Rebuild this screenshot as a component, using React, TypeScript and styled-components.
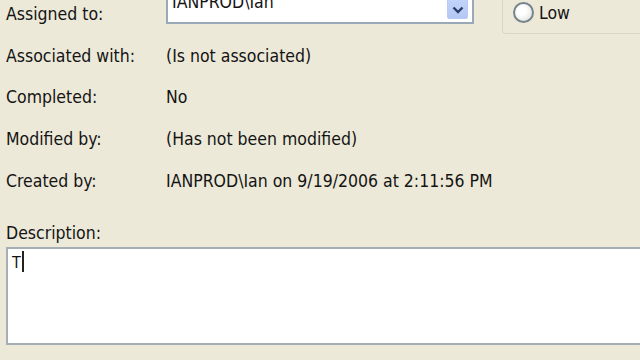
import React from "react";
import styled, { createGlobalStyle } from "styled-components";

const GlobalStyle = createGlobalStyle`
  html, body {
    margin: 0;
    padding: 0;
    background: #ece9d8;
    overflow: hidden;
  }
  body {
    font-family: "DejaVu Sans Condensed", "DejaVu Sans", "Liberation Sans", sans-serif;
    font-size: 17.5px;
    color: #141414;
  }
`;

type Field = { label: string; value: string };

const fields: Field[] = [
  { label: "Associated with:", value: "(Is not associated)" },
  { label: "Completed:", value: "No" },
  { label: "Modified by:", value: "(Has not been modified)" },
  { label: "Created by:", value: "IANPROD\\Ian on 9/19/2006 at 2:11:56 PM" },
];

export default function App() {
  return (
    <>
      <GlobalStyle />
      <Page>
        <FieldGrid>
          <Label>Assigned to:</Label>
          <ValueCell>
            <Combo>
              <ComboText>IANPROD\Ian</ComboText>
              <DropButton>
                <svg width="12" height="8" viewBox="0 0 12 8">
                  <path d="M1.5 1.5 L6 6 L10.5 1.5" fill="none" stroke="#2c3f6b" strokeWidth="2.4" />
                </svg>
              </DropButton>
            </Combo>
            <PriorityBox>
              <RadioRow>
                <Radio />
                <span>Low</span>
              </RadioRow>
            </PriorityBox>
          </ValueCell>
          {fields.map((f) => (
            <React.Fragment key={f.label}>
              <Label>{f.label}</Label>
              <Value>{f.value}</Value>
            </React.Fragment>
          ))}
        </FieldGrid>
        <DescLabel>Description:</DescLabel>
        <TextBox>
          T<Caret />
        </TextBox>
      </Page>
    </>
  );
}

const Page = styled.div`
  padding-left: 6px;
  margin-top: -7px;
`;

const FieldGrid = styled.div`
  display: grid;
  grid-template-columns: 160px 1fr;
  grid-auto-rows: 41.7px;
  align-items: center;
`;

const Label = styled.div`
  white-space: nowrap;
`;

const Value = styled.div`
  white-space: nowrap;
`;

const ValueCell = styled.div`
  align-self: stretch;
  display: flex;
  align-items: flex-start;
`;

const Combo = styled.div`
  margin-top: -4px;
  width: 308px;
  height: 35px;
  box-sizing: border-box;
  border: 2px solid #9aa9b8;
  background: #fff;
  display: flex;
  align-items: flex-end;
  justify-content: space-between;
  padding: 0 4px 3px 4px;
`;

const ComboText = styled.span`
  margin-bottom: 7px;
`;

const DropButton = styled.div`
  width: 21px;
  height: 24px;
  box-sizing: border-box;
  border-radius: 2px;
  background: linear-gradient(#c6d6fb, #b2c8f4);
  border: 1px solid #b9cbf2;
  display: flex;
  align-items: center;
  justify-content: center;
  padding-top: 6px;
`;

const PriorityBox = styled.div`
  margin-left: 28px;
  margin-top: -30px;
  height: 71px;
  flex: 1;
  box-sizing: border-box;
  border: 1px solid #d9d6c4;
  border-right: none;
  border-radius: 4px 0 0 4px;
  display: flex;
  align-items: flex-end;
  padding: 0 0 10px 10px;
`;

const RadioRow = styled.label`
  display: flex;
  align-items: center;
  gap: 5px;
`;

const Radio = styled.span`
  width: 21px;
  height: 21px;
  box-sizing: border-box;
  border-radius: 50%;
  border: 2px solid #76858c;
  background: radial-gradient(circle at 40% 40%, #fff 30%, #d9d9d2 100%);
`;

const DescLabel = styled.div`
  margin-top: 22px;
  height: 20px;
  line-height: 20px;
`;

const TextBox = styled.div`
  margin-top: 4px;
  width: 100%;
  height: 98px;
  box-sizing: border-box;
  border: 2px solid #a5adb5;
  border-right: none;
  background: #fff;
  padding: 4px 4px;
  display: flex;
  align-items: flex-start;
  font-size: 16px;
`;

const Caret = styled.span`
  display: inline-block;
  width: 2px;
  height: 21px;
  margin-left: 1px;
  margin-top: -2px;
  background: #222;
`;
